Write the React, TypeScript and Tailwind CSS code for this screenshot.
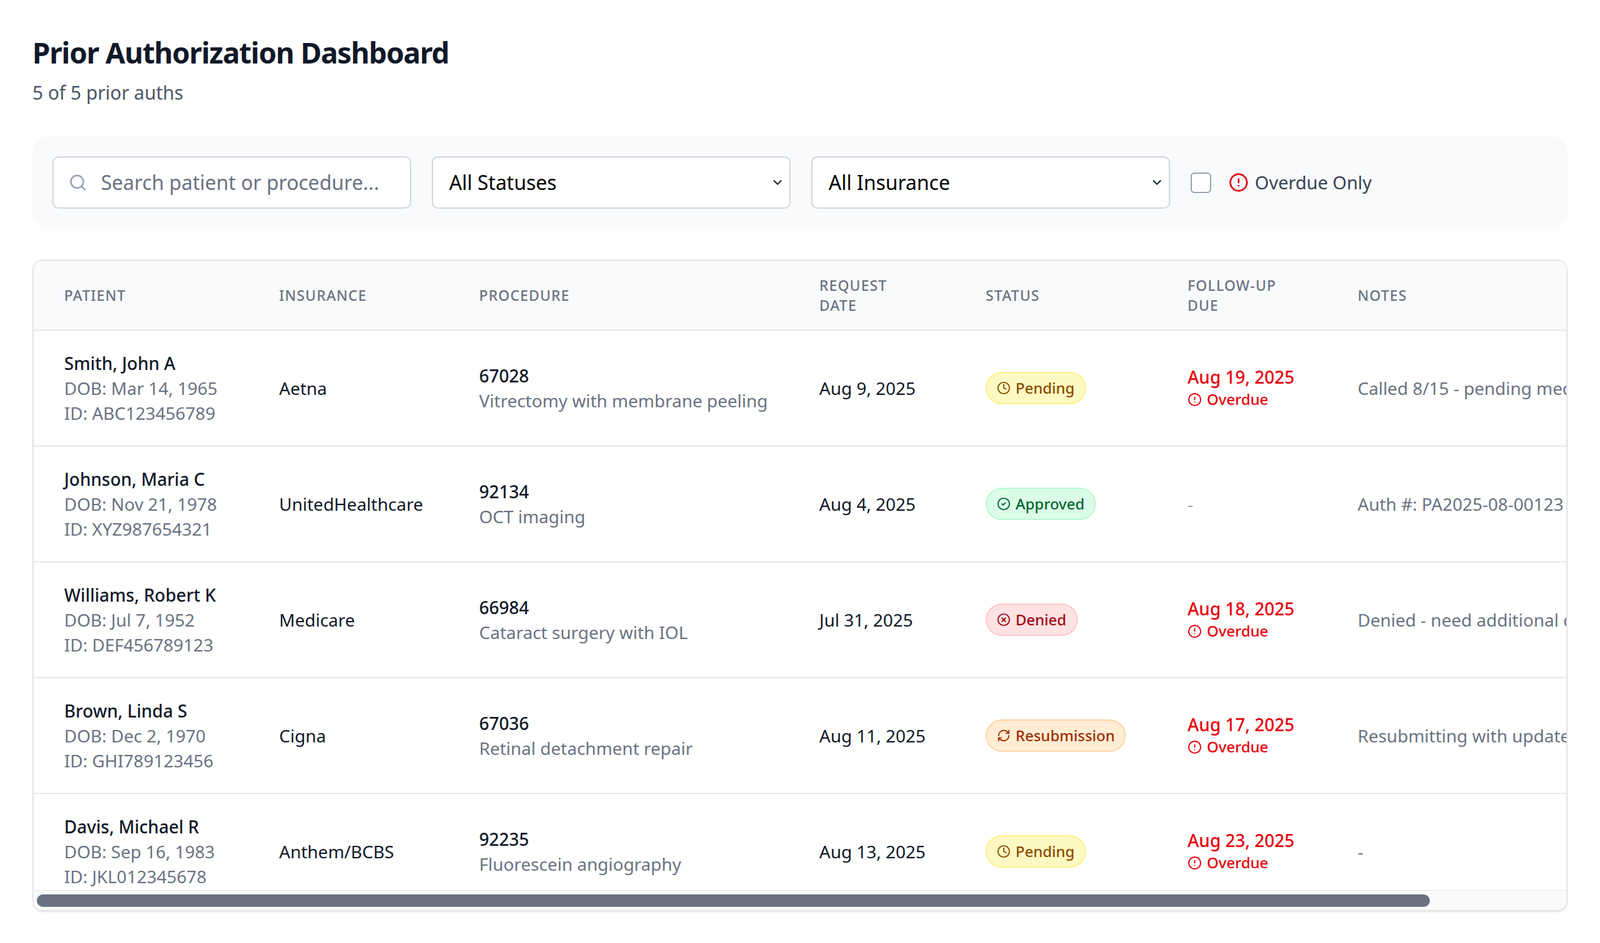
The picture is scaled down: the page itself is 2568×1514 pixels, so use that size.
import { Search, ChevronDown, CircleAlert, Clock, CircleCheck, CircleX, RefreshCw } from 'lucide-react'

const statusStyles = {
  Pending: { cls: 'bg-yellow-100 border-yellow-200 text-yellow-800', icon: Clock },
  Approved: { cls: 'bg-green-100 border-green-200 text-green-800', icon: CircleCheck },
  Denied: { cls: 'bg-red-100 border-red-200 text-red-800', icon: CircleX },
  Resubmission: { cls: 'bg-orange-100 border-orange-200 text-orange-800', icon: RefreshCw },
}

type Status = keyof typeof statusStyles

const rows: {
  name: string
  dob: string
  id: string
  insurance: string
  code: string
  proc: string
  date: string
  status: Status
  due: string | null
  notes: string
}[] = [
  { name: 'Smith, John A', dob: 'Mar 14, 1965', id: 'ABC123456789', insurance: 'Aetna', code: '67028', proc: 'Vitrectomy with membrane peeling', date: 'Aug 9, 2025', status: 'Pending', due: 'Aug 19, 2025', notes: 'Called 8/15 - pending medical review' },
  { name: 'Johnson, Maria C', dob: 'Nov 21, 1978', id: 'XYZ987654321', insurance: 'UnitedHealthcare', code: '92134', proc: 'OCT imaging', date: 'Aug 4, 2025', status: 'Approved', due: null, notes: 'Auth #: PA2025-08-00123' },
  { name: 'Williams, Robert K', dob: 'Jul 7, 1952', id: 'DEF456789123', insurance: 'Medicare', code: '66984', proc: 'Cataract surgery with IOL', date: 'Jul 31, 2025', status: 'Denied', due: 'Aug 18, 2025', notes: 'Denied - need additional documentation' },
  { name: 'Brown, Linda S', dob: 'Dec 2, 1970', id: 'GHI789123456', insurance: 'Cigna', code: '67036', proc: 'Retinal detachment repair', date: 'Aug 11, 2025', status: 'Resubmission', due: 'Aug 17, 2025', notes: 'Resubmitting with updated clinical notes' },
  { name: 'Davis, Michael R', dob: 'Sep 16, 1983', id: 'JKL012345678', insurance: 'Anthem/BCBS', code: '92235', proc: 'Fluorescein angiography', date: 'Aug 13, 2025', status: 'Pending', due: 'Aug 23, 2025', notes: '-' },
]

const cols = [
  { label: 'Patient', w: 'w-[345px]' },
  { label: 'Insurance', w: 'w-[321px]' },
  { label: 'Procedure', w: 'w-[546px]' },
  { label: 'Request\nDate', w: 'w-[267px]' },
  { label: 'Status', w: 'w-[324px]' },
  { label: 'Follow-up\nDue', w: 'w-[273px]' },
  { label: 'Notes', w: 'w-[700px]' },
]

const SelectBox = ({ label }: { label: string }) => (
  <div className="w-[576px] h-[84px] rounded-[10px] border-2 border-gray-300 bg-white flex items-center justify-between pl-[26px] pr-[8px]">
    <span className="text-[32px] text-black">{label}</span>
    <ChevronDown size={22} strokeWidth={2.5} className="text-gray-800" />
  </div>
)

const App = () => {
  return (
    <div className="min-h-screen bg-white px-[52px] pt-[54px] font-['Inter','Liberation_Sans',sans-serif]">
      <h1 className="text-[46px] font-bold text-gray-900 tracking-tight leading-[60px]">
        Prior Authorization Dashboard
      </h1>
      <p className="text-[30px] text-gray-600 mt-[12px]">5 of 5 prior auths</p>

      <div className="mt-[48px] bg-gray-50 rounded-[26px] h-[148px] px-[32px] flex items-center gap-[33px]">
        <div className="w-[576px] h-[84px] rounded-[10px] border-2 border-gray-300 bg-white flex items-center pl-[24px] gap-[22px]">
          <Search size={30} className="text-gray-400" />
          <span className="text-[32px] text-gray-500">Search patient or procedure...</span>
        </div>
        <SelectBox label="All Statuses" />
        <SelectBox label="All Insurance" />
        <div className="flex items-center">
          <div className="w-[33px] h-[33px] rounded-[6px] border-2 border-gray-400 bg-white" />
          <CircleAlert size={32} className="text-red-600 ml-[28px]" />
          <span className="text-[29px] text-gray-700 ml-[10px]">Overdue Only</span>
        </div>
      </div>

      <div className="mt-[50px] relative rounded-[16px] border-2 border-gray-200 overflow-hidden shadow-sm">
        <div className="overflow-hidden">
          <table className="table-fixed border-collapse w-[2776px]">
            <thead>
              <tr className="bg-gray-50 h-[111px] border-b-2 border-gray-200">
                {cols.map((c) => (
                  <th key={c.label} className={`${c.w} text-left pl-[49px] pr-[20px] align-middle text-[23px] font-medium uppercase tracking-wider text-gray-500 leading-[32px] whitespace-pre-line`}>
                    {c.label}
                  </th>
                ))}
              </tr>
            </thead>
            <tbody>
              {rows.map((r) => {
                const s = statusStyles[r.status]
                const Icon = s.icon
                return (
                  <tr key={r.name} className="h-[186px] border-b-2 border-gray-200 text-[28px]">
                    <td className="pl-[49px] leading-[40px]">
                      <div className="font-medium text-gray-900">{r.name}</div>
                      <div className="text-gray-500">DOB: {r.dob}</div>
                      <div className="text-gray-500">ID: {r.id}</div>
                    </td>
                    <td className="pl-[49px] text-gray-900">{r.insurance}</td>
                    <td className="pl-[49px] leading-[40px]">
                      <div className="font-medium text-gray-900">{r.code}</div>
                      <div className="text-gray-500">{r.proc}</div>
                    </td>
                    <td className="pl-[49px] text-gray-900">{r.date}</td>
                    <td className="pl-[49px]">
                      <span className={`inline-flex items-center gap-[8px] h-[52px] px-[16px] rounded-full border-2 text-[24px] font-medium ${s.cls}`}>
                        <Icon size={22} strokeWidth={2} />
                        {r.status}
                      </span>
                    </td>
                    <td className="pl-[49px]">
                      {r.due ? (
                        <div className="leading-[36px]">
                          <div className="text-red-600 font-medium">{r.due}</div>
                          <div className="flex items-center gap-[8px] text-red-600 text-[24px] font-medium">
                            <CircleAlert size={23} />
                            Overdue
                          </div>
                        </div>
                      ) : (
                        <span className="text-gray-400">-</span>
                      )}
                    </td>
                    <td className="pl-[49px] text-gray-500 whitespace-nowrap">{r.notes}</td>
                  </tr>
                )
              })}
            </tbody>
          </table>
        </div>
        <div className="absolute left-0 right-0 bottom-0 h-[32px] bg-gray-50/90 border-t border-gray-200 flex items-center px-[5px]">
          <div className="h-[20px] w-[2236px] rounded-full bg-gray-500" />
        </div>
      </div>
    </div>
  )
}

export default App
